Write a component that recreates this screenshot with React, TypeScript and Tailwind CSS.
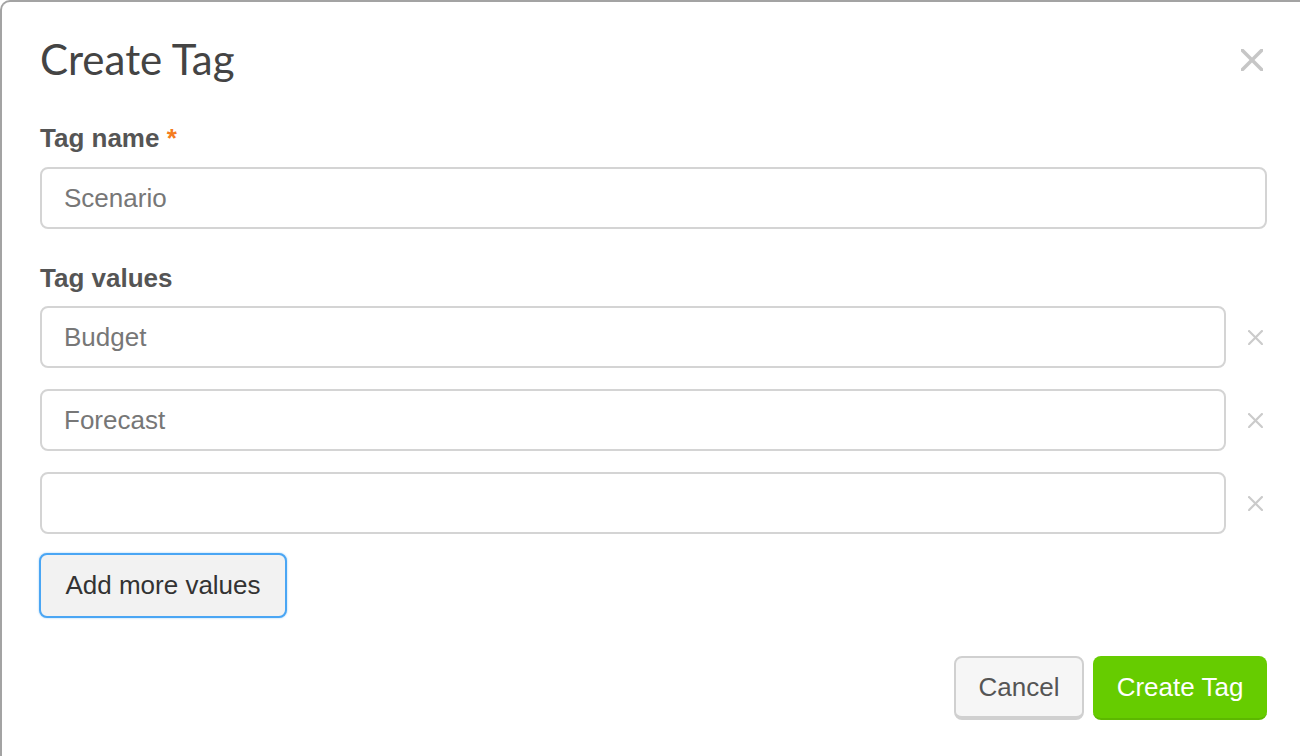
import React from "react";

function Cross({ size, stroke, color }: { size: number; stroke: number; color: string }) {
  return (
    <svg width={size} height={size} viewBox={`0 0 ${size} ${size}`} aria-hidden="true">
      <line x1={1} y1={1} x2={size - 1} y2={size - 1} stroke={color} strokeWidth={stroke} strokeLinecap="square" />
      <line x1={size - 1} y1={1} x2={1} y2={size - 1} stroke={color} strokeWidth={stroke} strokeLinecap="square" />
    </svg>
  );
}

const inputCls =
  "h-[62px] w-full rounded-[8px] border-2 border-[#d4d4d4] bg-white px-[22px] text-[26px] text-[#777] outline-none font-['Liberation_Sans',Arial,sans-serif]";

export default function App() {
  const values = ["Budget", "Forecast", ""];

  return (
    <div className="h-[756px] w-[1300px] overflow-hidden bg-white">
      <div className="flex h-[800px] flex-col rounded-tl-[10px] border-l-2 border-t-2 border-[#a3a3a3] pl-[38px] pr-[33px] pt-[31px] font-['Liberation_Sans',Arial,sans-serif]">
        {/* Header */}
        <div className="flex items-center justify-between">
          <h2 className="font-['Lato',sans-serif] text-[42px] leading-[53px] text-[#444]">Create Tag</h2>
          <button className="mr-[4px] flex items-center" aria-label="Close">
            <Cross size={22} stroke={3.5} color="#c6c6c6" />
          </button>
        </div>

        {/* Tag name */}
        <label className="mt-[37px] text-[26px] font-bold leading-[30px] text-[#555]">
          Tag name <span className="text-[#f47c20]">*</span>
        </label>
        <input className={`mt-[14px] ${inputCls}`} defaultValue="Scenario" readOnly />

        {/* Tag values */}
        <label className="mt-[34px] text-[26px] font-bold leading-[30px] text-[#555]">Tag values</label>
        <div className="mt-[13px] flex flex-col gap-[21px]">
          {values.map((v, i) => (
            <div key={i} className="flex items-center">
              <input className={`flex-1 ${inputCls}`} defaultValue={v} readOnly />
              <div className="flex w-[41px] justify-end pr-[4px]">
                <Cross size={15} stroke={2.2} color="#cbcbcb" />
              </div>
            </div>
          ))}
        </div>

        <div>
          <button className="ml-[-1px] mt-[19px] h-[65px] w-[248px] rounded-[8px] border-2 border-[#4aa6f4] bg-[#f2f2f2] text-[26px] text-[#333] shadow-[0_0_2px_rgba(74,166,244,0.6)]">
            Add more values
          </button>
        </div>

        {/* Footer */}
        <div className="mt-[38px] flex justify-end gap-[9px]">
          <button className="h-[64px] w-[130px] rounded-[8px] border-2 border-b-[4px] border-[#d0d0d0] bg-[#f6f6f6] text-[26px] text-[#555]">
            Cancel
          </button>
          <button className="h-[64px] w-[174px] rounded-[8px] border-b-2 border-[#5cb800] bg-[#66cc00] text-[26px] text-white">
            Create Tag
          </button>
        </div>
      </div>
    </div>
  );
}
